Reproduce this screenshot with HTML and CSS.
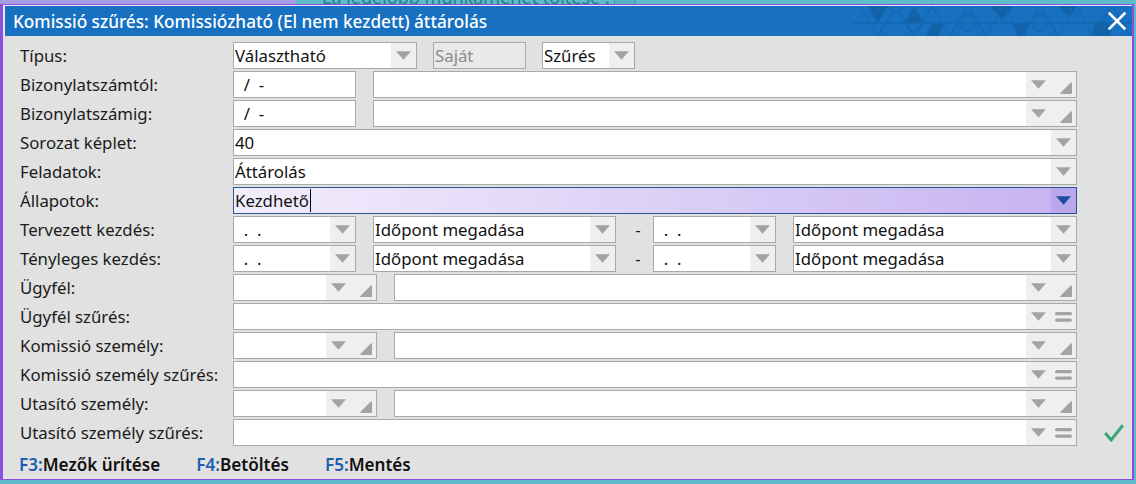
FILE: index.html
```html
<!DOCTYPE html>
<html lang="hu">
<head>
<meta charset="utf-8">
<title>Komissió szűrés</title>
<link rel="stylesheet" href="styles.css">
</head>
<body>
<div class="desk-top">
  <div class="dt-left"></div>
  <div class="dt-right">
    <div class="dt-text">La legelőbb munkamenet töltése :</div>
    <div class="dt-box"></div>
  </div>
</div>
<div class="window">
  <div class="titlebar">
    <span class="title">Komissió szűrés: Komissiózható (El nem kezdett) áttárolás</span>
    <svg class="title-pattern" width="280" height="30" viewBox="0 0 280 30">
      <g fill="#1262a8">
        <polygon points="16,0 36,0 26,17"/>
        <polygon points="62,0 52,17 72,17"/>
        <polygon points="80,17 92,17 86,30 74,30"/>
        <polygon points="138,0 162,0 150,14"/>
        <polygon points="160,17 178,17 172,30 166,30"/>
        <polygon points="206,0 226,0 216,10"/>
      </g>
      <g fill="none" stroke="#1467b2" stroke-width="1.4">
        <polyline points="8,0 26,30 44,0 62,30 80,0 98,30 116,0 134,30 152,0 170,30 188,0 206,30 224,0 242,30 260,0 278,30"/>
        <line x1="0" y1="17" x2="280" y2="17"/>
        <circle cx="62" cy="17" r="8"/>
        <circle cx="116" cy="17" r="8"/>
        <circle cx="188" cy="17" r="8"/>
        <circle cx="44" cy="0" r="6"/>
        <circle cx="224" cy="2" r="5"/>
      </g>
      <circle cx="250" cy="24" r="9" fill="#1262a8"/>
    </svg>
    <span class="close">
      <svg width="18" height="18" viewBox="0 0 18 18"><path d="M1.5 1.5 L16.5 16.5 M16.5 1.5 L1.5 16.5" stroke="#fff" stroke-width="2.6" stroke-linecap="square"/></svg>
    </span>
  </div>
  <div class="body">
    <div class="row">
      <div class="label">Típus:</div>
      <div class="fields tight">
        <div class="box f-type"><span class="val">Választható</span><span class="btn"><svg class="i-arrow" width="15" height="9" viewBox="0 0 15 9"><path d="M0 0.3 H15 L7.5 8.7 Z"/></svg></span></div>
        <div class="box f-small disabled"><span class="val">Saját</span></div>
        <div class="box f-small"><span class="val">Szűrés</span><span class="btn"><svg class="i-arrow" width="15" height="9" viewBox="0 0 15 9"><path d="M0 0.3 H15 L7.5 8.7 Z"/></svg></span></div>
      </div>
    </div>
    <div class="row">
      <div class="label">Bizonylatszámtól:</div>
      <div class="fields">
        <div class="box f-num"><span class="val">  /  -</span></div>
        <div class="box grow"><span class="val"></span><span class="btn btn2"><svg class="i-arrow" width="15" height="9" viewBox="0 0 15 9"><path d="M0 0.3 H15 L7.5 8.7 Z"/></svg><svg class="i-corner" width="12" height="12" viewBox="0 0 12 12"><path d="M10.8 0.6 Q12 -0.2 12 1.4 V10.8 Q12 12 10.8 12 H1.4 Q-0.2 12 0.6 10.8 Z"/></svg></span></div>
      </div>
    </div>
    <div class="row">
      <div class="label">Bizonylatszámig:</div>
      <div class="fields">
        <div class="box f-num"><span class="val">  /  -</span></div>
        <div class="box grow"><span class="val"></span><span class="btn btn2"><svg class="i-arrow" width="15" height="9" viewBox="0 0 15 9"><path d="M0 0.3 H15 L7.5 8.7 Z"/></svg><svg class="i-corner" width="12" height="12" viewBox="0 0 12 12"><path d="M10.8 0.6 Q12 -0.2 12 1.4 V10.8 Q12 12 10.8 12 H1.4 Q-0.2 12 0.6 10.8 Z"/></svg></span></div>
      </div>
    </div>
    <div class="row">
      <div class="label">Sorozat képlet:</div>
      <div class="fields">
        <div class="box grow"><span class="val">40</span><span class="btn"><svg class="i-arrow" width="15" height="9" viewBox="0 0 15 9"><path d="M0 0.3 H15 L7.5 8.7 Z"/></svg></span></div>
      </div>
    </div>
    <div class="row">
      <div class="label">Feladatok:</div>
      <div class="fields">
        <div class="box grow"><span class="val">Áttárolás</span><span class="btn"><svg class="i-arrow" width="15" height="9" viewBox="0 0 15 9"><path d="M0 0.3 H15 L7.5 8.7 Z"/></svg></span></div>
      </div>
    </div>
    <div class="row">
      <div class="label">Állapotok:</div>
      <div class="fields">
        <div class="box grow focus"><span class="val">Kezdhető<span class="caret"></span></span><span class="btn"><svg class="i-arrow" width="15" height="9" viewBox="0 0 15 9"><path d="M0 0.3 H15 L7.5 8.7 Z"/></svg></span></div>
      </div>
    </div>
    <div class="row">
      <div class="label">Tervezett kezdés:</div>
      <div class="fields dates">
        <div class="box f-num sep"><span class="val">  .  .</span><span class="btn"><svg class="i-arrow" width="15" height="9" viewBox="0 0 15 9"><path d="M0 0.3 H15 L7.5 8.7 Z"/></svg></span></div>
        <div class="box f-time"><span class="val">Időpont megadása</span><span class="btn"><svg class="i-arrow" width="15" height="9" viewBox="0 0 15 9"><path d="M0 0.3 H15 L7.5 8.7 Z"/></svg></span></div>
        <span class="dash">-</span>
        <div class="box f-num sep"><span class="val">  .  .</span><span class="btn"><svg class="i-arrow" width="15" height="9" viewBox="0 0 15 9"><path d="M0 0.3 H15 L7.5 8.7 Z"/></svg></span></div>
        <div class="box grow"><span class="val">Időpont megadása</span><span class="btn"><svg class="i-arrow" width="15" height="9" viewBox="0 0 15 9"><path d="M0 0.3 H15 L7.5 8.7 Z"/></svg></span></div>
      </div>
    </div>
    <div class="row">
      <div class="label">Tényleges kezdés:</div>
      <div class="fields dates">
        <div class="box f-num sep"><span class="val">  .  .</span><span class="btn"><svg class="i-arrow" width="15" height="9" viewBox="0 0 15 9"><path d="M0 0.3 H15 L7.5 8.7 Z"/></svg></span></div>
        <div class="box f-time"><span class="val">Időpont megadása</span><span class="btn"><svg class="i-arrow" width="15" height="9" viewBox="0 0 15 9"><path d="M0 0.3 H15 L7.5 8.7 Z"/></svg></span></div>
        <span class="dash">-</span>
        <div class="box f-num sep"><span class="val">  .  .</span><span class="btn"><svg class="i-arrow" width="15" height="9" viewBox="0 0 15 9"><path d="M0 0.3 H15 L7.5 8.7 Z"/></svg></span></div>
        <div class="box grow"><span class="val">Időpont megadása</span><span class="btn"><svg class="i-arrow" width="15" height="9" viewBox="0 0 15 9"><path d="M0 0.3 H15 L7.5 8.7 Z"/></svg></span></div>
      </div>
    </div>
    <div class="row">
      <div class="label">Ügyfél:</div>
      <div class="fields">
        <div class="box f-code"><span class="val"></span><span class="btn btn2"><svg class="i-arrow" width="15" height="9" viewBox="0 0 15 9"><path d="M0 0.3 H15 L7.5 8.7 Z"/></svg><svg class="i-corner" width="12" height="12" viewBox="0 0 12 12"><path d="M10.8 0.6 Q12 -0.2 12 1.4 V10.8 Q12 12 10.8 12 H1.4 Q-0.2 12 0.6 10.8 Z"/></svg></span></div>
        <div class="box grow"><span class="val"></span><span class="btn btn2"><svg class="i-arrow" width="15" height="9" viewBox="0 0 15 9"><path d="M0 0.3 H15 L7.5 8.7 Z"/></svg><svg class="i-corner" width="12" height="12" viewBox="0 0 12 12"><path d="M10.8 0.6 Q12 -0.2 12 1.4 V10.8 Q12 12 10.8 12 H1.4 Q-0.2 12 0.6 10.8 Z"/></svg></span></div>
      </div>
    </div>
    <div class="row">
      <div class="label">Ügyfél szűrés:</div>
      <div class="fields">
        <div class="box grow"><span class="val"></span><span class="btn btn2"><svg class="i-arrow" width="15" height="9" viewBox="0 0 15 9"><path d="M0 0.3 H15 L7.5 8.7 Z"/></svg><svg class="i-eq" width="17" height="10" viewBox="0 0 17 10"><rect x="0" y="0" width="17" height="3.3" rx="1.6"/><rect x="0" y="6.4" width="17" height="3.3" rx="1.6"/></svg></span></div>
      </div>
    </div>
    <div class="row">
      <div class="label">Komissió személy:</div>
      <div class="fields">
        <div class="box f-code"><span class="val"></span><span class="btn btn2"><svg class="i-arrow" width="15" height="9" viewBox="0 0 15 9"><path d="M0 0.3 H15 L7.5 8.7 Z"/></svg><svg class="i-corner" width="12" height="12" viewBox="0 0 12 12"><path d="M10.8 0.6 Q12 -0.2 12 1.4 V10.8 Q12 12 10.8 12 H1.4 Q-0.2 12 0.6 10.8 Z"/></svg></span></div>
        <div class="box grow"><span class="val"></span><span class="btn btn2"><svg class="i-arrow" width="15" height="9" viewBox="0 0 15 9"><path d="M0 0.3 H15 L7.5 8.7 Z"/></svg><svg class="i-corner" width="12" height="12" viewBox="0 0 12 12"><path d="M10.8 0.6 Q12 -0.2 12 1.4 V10.8 Q12 12 10.8 12 H1.4 Q-0.2 12 0.6 10.8 Z"/></svg></span></div>
      </div>
    </div>
    <div class="row">
      <div class="label">Komissió személy szűrés:</div>
      <div class="fields">
        <div class="box grow"><span class="val"></span><span class="btn btn2"><svg class="i-arrow" width="15" height="9" viewBox="0 0 15 9"><path d="M0 0.3 H15 L7.5 8.7 Z"/></svg><svg class="i-eq" width="17" height="10" viewBox="0 0 17 10"><rect x="0" y="0" width="17" height="3.3" rx="1.6"/><rect x="0" y="6.4" width="17" height="3.3" rx="1.6"/></svg></span></div>
      </div>
    </div>
    <div class="row">
      <div class="label">Utasító személy:</div>
      <div class="fields">
        <div class="box f-code"><span class="val"></span><span class="btn btn2"><svg class="i-arrow" width="15" height="9" viewBox="0 0 15 9"><path d="M0 0.3 H15 L7.5 8.7 Z"/></svg><svg class="i-corner" width="12" height="12" viewBox="0 0 12 12"><path d="M10.8 0.6 Q12 -0.2 12 1.4 V10.8 Q12 12 10.8 12 H1.4 Q-0.2 12 0.6 10.8 Z"/></svg></span></div>
        <div class="box grow"><span class="val"></span><span class="btn btn2"><svg class="i-arrow" width="15" height="9" viewBox="0 0 15 9"><path d="M0 0.3 H15 L7.5 8.7 Z"/></svg><svg class="i-corner" width="12" height="12" viewBox="0 0 12 12"><path d="M10.8 0.6 Q12 -0.2 12 1.4 V10.8 Q12 12 10.8 12 H1.4 Q-0.2 12 0.6 10.8 Z"/></svg></span></div>
      </div>
    </div>
    <div class="row">
      <div class="label">Utasító személy szűrés:</div>
      <div class="fields">
        <div class="box grow"><span class="val"></span><span class="btn btn2"><svg class="i-arrow" width="15" height="9" viewBox="0 0 15 9"><path d="M0 0.3 H15 L7.5 8.7 Z"/></svg><svg class="i-eq" width="17" height="10" viewBox="0 0 17 10"><rect x="0" y="0" width="17" height="3.3" rx="1.6"/><rect x="0" y="6.4" width="17" height="3.3" rx="1.6"/></svg></span></div>
      </div>
      <svg class="check" width="20" height="18" viewBox="0 0 20 18"><polyline points="1.2,9 7.2,16 18.8,1.2" fill="none" stroke="#3ba67b" stroke-width="3"/></svg>
    </div>
    <div class="footer">
      <span class="fk"><span class="key">F3:</span>Mezők ürítése</span>
      <span class="fk"><span class="key">F4:</span>Betöltés</span>
      <span class="fk"><span class="key">F5:</span>Mentés</span>
    </div>
  </div>
</div>
</body>
</html>
```

FILE: styles.css
```css
html, body {
  margin: 0;
  padding: 0;
}
body {
  width: 1136px;
  height: 484px;
  overflow: hidden;
  background: #5dbac8;
  font-family: "Noto Sans", "Open Sans", sans-serif;
  font-size: 16.8px;
  color: #1a1a1a;
}

/* desktop behind the window */
.desk-top {
  display: flex;
  height: 4px;
  overflow: hidden;
}
.dt-left {
  width: 296px;
  background: #a49de4;
}
.dt-right {
  flex: 1;
  display: flex;
  background: #5fbcc9;
}
.dt-text {
  margin: -13px 0 0 26px;
  line-height: 20px;
  font-size: 18px;
  color: #2b7c88;
  white-space: nowrap;
  width: 292px;
}
.dt-box {
  width: 20px;
  border-left: 1px solid #3f98a8;
  border-right: 1px solid #3f98a8;
  background: #58b2c6;
}

/* window */
.window {
  width: 1134px;
  height: 476px;
  box-sizing: border-box;
  border: 1px solid #8a4fdf;
  border-left-width: 3px;
  border-right-width: 2px;
  background: #e1e1e1;
  display: flex;
  flex-direction: column;
}
.titlebar {
  position: relative;
  flex: none;
  height: 31px;
  box-sizing: border-box;
  border-top: 1px solid #ebe6f8;
  border-left: 2px solid #ebe6f8;
  background: #1771c0;
  display: flex;
  align-items: center;
  padding-left: 8px;
  color: #fff;
  overflow: hidden;
}
.title {
  position: relative;
  z-index: 1;
  font-size: 17.2px;
  font-weight: 500;
  white-space: nowrap;
}
.title-pattern {
  position: absolute;
  right: 0;
  top: 0;
}
.close {
  position: relative;
  z-index: 1;
  margin-left: auto;
  margin-right: 6px;
  width: 18px;
  height: 18px;
  display: flex;
}

.body {
  flex: 1;
  display: flex;
  flex-direction: column;
  padding: 6px 0 0 17px;
}
.row {
  display: flex;
  align-items: center;
  height: 27px;
  margin-bottom: 2px;
}
.label {
  width: 213px;
  flex: none;
  white-space: nowrap;
  color: #1b1b1b;
}
.fields {
  width: 844px;
  flex: none;
  display: flex;
  gap: 17px;
  height: 27px;
}
.fields.tight {
  gap: 16px;
}
.fields.dates {
  gap: 0;
}
.dates .sep {
  margin-right: 17px;
}
.dash {
  width: 37px;
  box-sizing: border-box;
  padding-left: 7px;
  text-align: center;
  line-height: 27px;
}

.box {
  box-sizing: border-box;
  height: 27px;
  border: 1px solid #a9a9a9;
  background: #fff;
  display: flex;
  align-items: center;
  flex: none;
  color: #111;
}
.box.grow {
  flex: 1;
}
.f-type { width: 184px; }
.f-small { width: 93px; }
.f-num { width: 123px; }
.f-code { width: 144px; }
.f-time { width: 243px; }

.val {
  flex: 1;
  min-width: 0;
  padding-left: 1px;
  white-space: pre;
  overflow: hidden;
  display: flex;
  align-items: center;
}
.box.disabled {
  background: #e9e9e9;
  color: #8a8a8a;
}
.btn {
  flex: none;
  width: 25px;
  align-self: stretch;
  background: #efefef;
  display: flex;
  align-items: center;
  justify-content: center;
}
.btn2 {
  width: 50px;
  box-sizing: border-box;
  justify-content: space-between;
  padding: 0 4px 0 5px;
}
.i-arrow path { fill: #a3a3a3; }
.i-corner { margin-top: 6px; }
.i-corner path { fill: #a3a3a3; }
.i-eq rect { fill: #a3a3a3; }

.box.focus {
  border-color: #2a5696;
  background: linear-gradient(to right, #f3eefd, #c6b3f0);
}
.box.focus .btn {
  background: #b9a6ec;
}
.box.focus .i-arrow path { fill: #1b4d9b; }
.caret {
  display: inline-block;
  width: 1.5px;
  height: 23px;
  background: #000;
  margin-left: 1px;
}

.check {
  margin-left: 27px;
  flex: none;
}

.footer {
  display: flex;
  gap: 36px;
  margin-top: 7px;
  line-height: 20px;
  font-size: 17.1px;
  font-weight: 600;
  color: #111;
  margin-left: -1px;
}
.key {
  color: #1b5fae;
}
```
